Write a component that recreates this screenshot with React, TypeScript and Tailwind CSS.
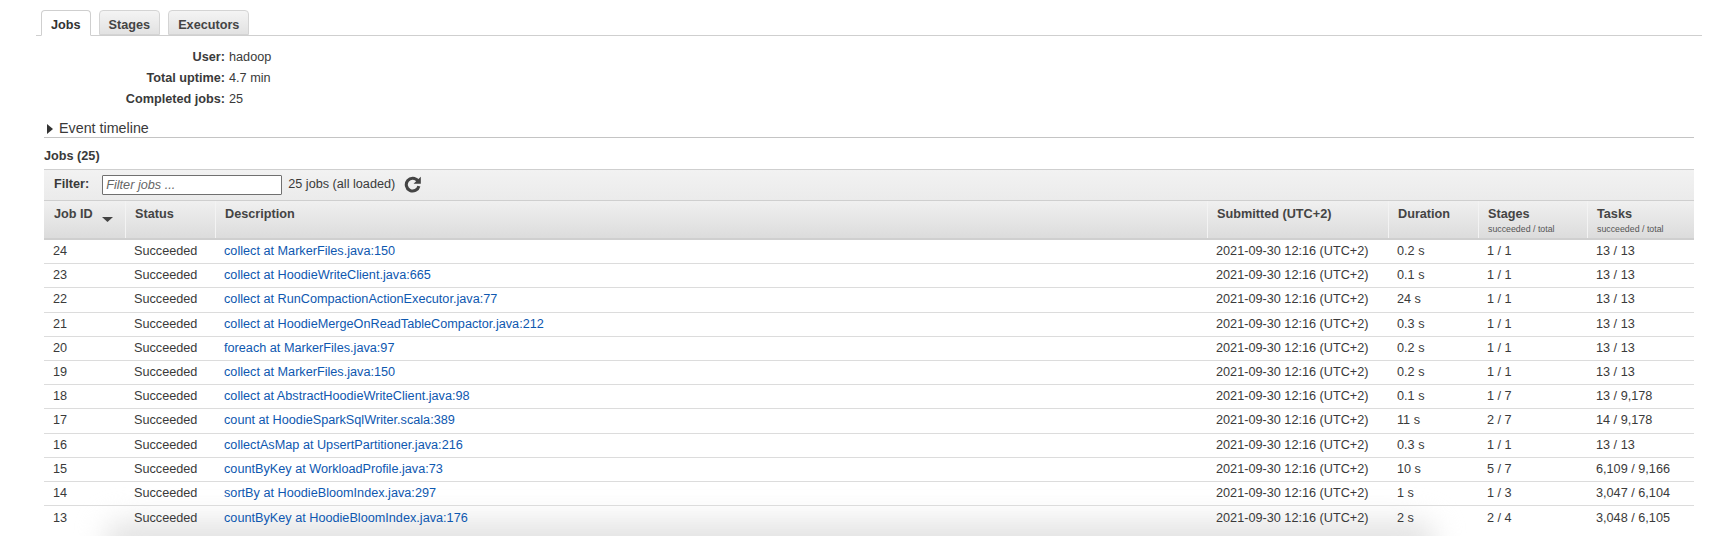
const jobs = [
  ['24', 'collect at MarkerFiles.java:150', '0.2 s', '1 / 1', '13 / 13'],
  ['23', 'collect at HoodieWriteClient.java:665', '0.1 s', '1 / 1', '13 / 13'],
  ['22', 'collect at RunCompactionActionExecutor.java:77', '24 s', '1 / 1', '13 / 13'],
  ['21', 'collect at HoodieMergeOnReadTableCompactor.java:212', '0.3 s', '1 / 1', '13 / 13'],
  ['20', 'foreach at MarkerFiles.java:97', '0.2 s', '1 / 1', '13 / 13'],
  ['19', 'collect at MarkerFiles.java:150', '0.2 s', '1 / 1', '13 / 13'],
  ['18', 'collect at AbstractHoodieWriteClient.java:98', '0.1 s', '1 / 7', '13 / 9,178'],
  ['17', 'count at HoodieSparkSqlWriter.scala:389', '11 s', '2 / 7', '14 / 9,178'],
  ['16', 'collectAsMap at UpsertPartitioner.java:216', '0.3 s', '1 / 1', '13 / 13'],
  ['15', 'countByKey at WorkloadProfile.java:73', '10 s', '5 / 7', '6,109 / 9,166'],
  ['14', 'sortBy at HoodieBloomIndex.java:297', '1 s', '1 / 3', '3,047 / 6,104'],
  ['13', 'countByKey at HoodieBloomIndex.java:176', '2 s', '2 / 4', '3,048 / 6,105'],
];

const gridCols = 'grid grid-cols-[81px_90px_992px_181px_90px_109px_1fr]';

function Tab({ label, active }: { label: string; active?: boolean }) {
  return (
    <div
      className={
        active
          ? 'h-[26px] -mb-px px-[9px] pt-[5px] rounded-t-[4px] border border-[#cfcfcf] border-b-white bg-white font-bold text-[#333]'
          : 'h-[25px] px-[9px] pt-[5px] rounded-t-[4px] border border-[#d4d4d4] bg-gradient-to-b from-[#f4f4f4] to-[#e2e2e2] font-bold text-[#444]'
      }
    >
      {label}
    </div>
  );
}

function HeadCell({ label, sub }: { label: string; sub?: string }) {
  return (
    <div className="pl-[9px] pt-[6px] border-l border-[#f3f3f3]">
      <div className="font-bold leading-[15px] text-[#444]">{label}</div>
      {sub && <div className="text-[8.8px] leading-[12px] mt-[1px] text-[#555]">{sub}</div>}
    </div>
  );
}

export default function App() {
  return (
    <div className="relative w-[1735px] h-[536px] overflow-hidden bg-white font-['Liberation_Sans',Arial,sans-serif] text-[12.68px] text-[#3a3a3a]">
      {/* Shadow of the window below, sits behind the content */}
      <div className="absolute left-[105px] w-[1330px] -bottom-[34px] h-[50px] rounded-[20px] bg-[#e4e4e4] blur-[14px]" />

      <div className="relative">
        {/* Tabs */}
        <div className="ml-[36px] mr-[33px] pt-[10px] pl-[5px] flex gap-[8px] border-b border-[#cfcfcf] h-[36px]">
          <Tab label="Jobs" active />
          <Tab label="Stages" />
          <Tab label="Executors" />
        </div>

        {/* Summary */}
        <div className="mt-[11px] grid grid-cols-[225px_1fr] gap-x-[4px] leading-[21px]">
          <div className="text-right font-bold">User:</div>
          <div>hadoop</div>
          <div className="text-right font-bold">Total uptime:</div>
          <div>4.7 min</div>
          <div className="text-right font-bold">Completed jobs:</div>
          <div>25</div>
        </div>

        <div className="mx-[44px] w-[1650px]">
          {/* Event timeline */}
          <div className="mt-[8px] h-[20px] flex items-center gap-[6px] border-b border-[#c4c4c4] text-[14.3px] pt-[2px]">
            <svg width="6" height="10" viewBox="0 0 6 10" className="ml-[3px]">
              <path d="M0 0 L6 5 L0 10 Z" fill="#333" />
            </svg>
            <span>Event timeline</span>
          </div>

          <div className="mt-[10px] font-bold leading-[16px]">Jobs (25)</div>

          {/* Filter bar */}
          <div className="mt-[5px] h-[31px] flex items-center border-t border-[#cfcfcf] bg-gradient-to-b from-[#f2f2f2] to-[#ebebeb] pl-[10px]">
            <span className="font-bold">Filter:</span>
            <input
              readOnly
              placeholder="Filter jobs ..."
              className="ml-[13px] w-[180px] h-[20px] px-[3px] bg-white border border-[#707070] rounded-[1px] text-[12.68px] italic placeholder:text-[#666] outline-none"
            />
            <span className="ml-[6px]">25 jobs (all loaded)</span>
            <svg width="17" height="17" viewBox="0 0 16 16" className="ml-[9px] -mt-[1px]">
              <path d="M13 4.6 A6 6 0 1 0 14 9.5" fill="none" stroke="#444" strokeWidth="2.9" />
              <path d="M15.8 0.6 V7.2 H9 Z" fill="#444" />
            </svg>
          </div>

          {/* Header */}
          <div className={`${gridCols} h-[40px] border-t border-b-2 border-t-[#cfcfcf] border-b-[#cfcfcf] bg-gradient-to-b from-[#f0f0f0] to-[#dcdcdc]`}>
            <div className="pl-[10px] pt-[6px] flex gap-[9px]">
              <span className="font-bold leading-[15px] text-[#444]">Job ID</span>
              <svg width="11" height="5" viewBox="0 0 11 5" className="mt-[10px]">
                <path d="M0 0 H11 L5.5 5 Z" fill="#444" />
              </svg>
            </div>
            <HeadCell label="Status" />
            <HeadCell label="Description" />
            <HeadCell label="Submitted (UTC+2)" />
            <HeadCell label="Duration" />
            <HeadCell label="Stages" sub="succeeded / total" />
            <HeadCell label="Tasks" sub="succeeded / total" />
          </div>

          {/* Rows */}
          {jobs.map((job) => (
            <div key={job[0]} className={`${gridCols} h-[24.2px] items-center border-b border-[#dcdcdc] last:border-b-0`}>
              <div className="pl-[9px]">{job[0]}</div>
              <div className="pl-[9px]">Succeeded</div>
              <div className="pl-[9px] text-[#0e58b0]">{job[1]}</div>
              <div className="pl-[9px]">2021-09-30 12:16 (UTC+2)</div>
              <div className="pl-[9px]">{job[2]}</div>
              <div className="pl-[9px]">{job[3]}</div>
              <div className="pl-[9px]">{job[4]}</div>
            </div>
          ))}
        </div>
      </div>
    </div>
  );
}
